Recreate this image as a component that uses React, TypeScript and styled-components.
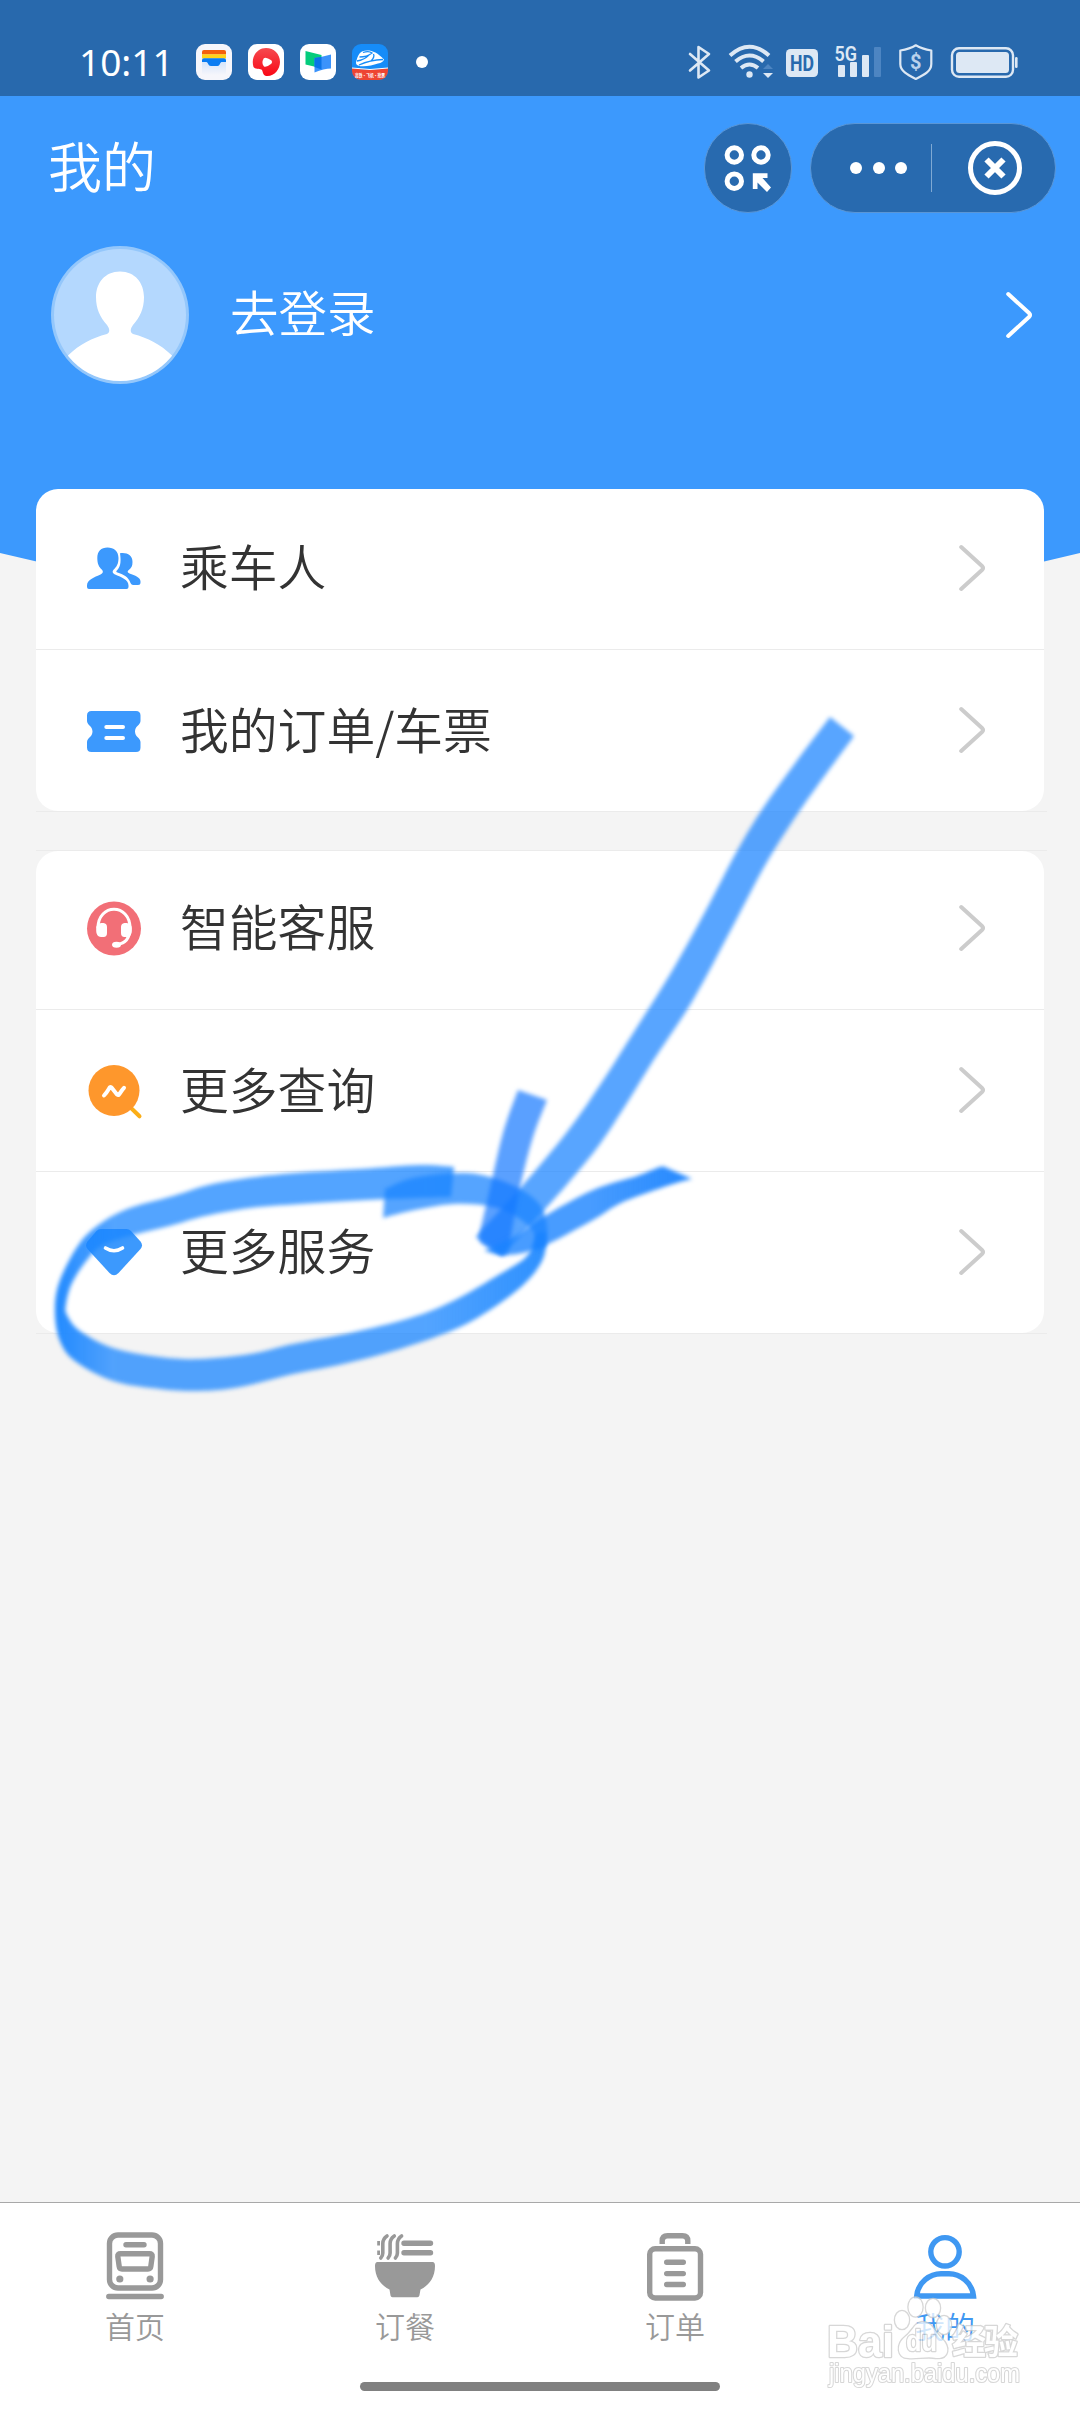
import React from 'react';
import styled, { createGlobalStyle } from 'styled-components';

const BLUE = '#3c99fd';
const DEEP = '#286aaf';
const STATUS = '#dde8f4';
const GREY = '#999999';

const GlobalStyle = createGlobalStyle`
  * { box-sizing: border-box; }
  body {
    margin: 0;
    background: #f4f4f4;
    font-family: "Noto Sans", "Noto Sans CJK SC", sans-serif;
  }
`;

const Page = styled.div`
  position: relative;
  display: flex;
  flex-direction: column;
  width: 1080px;
  height: 2412px;
  overflow: hidden;
  background: #f4f4f4;
`;

const Hero = styled.header`
  flex: none;
  height: 620px;
  background: ${BLUE};
  clip-path: circle(2275px at 540px -1657px);
`;

const StatusBar = styled.div`
  display: flex;
  justify-content: space-between;
  height: 96px;
  padding: 28px 60px 0 79px;
  background: #2869ad;
`;

const StatusLeft = styled.div`
  display: flex;
  align-items: center;
  height: 68px;
`;

const Clock = styled.span`
  width: 117px;
  padding-bottom: 1px;
  color: #fff;
  font-size: 37px;
  font-weight: 450;
  line-height: 67px;
`;

const AppIcons = styled.div`
  display: flex;
  gap: 16px;
`;

const Dot = styled.i<{ $size: number }>`
  width: ${(p) => p.$size}px;
  height: ${(p) => p.$size}px;
  border-radius: 50%;
  background: #fff;
`;

const MoreDot = styled(Dot)`
  margin-left: 28px;
`;

const StatusIcons = styled.svg`
  flex: none;
  width: 336px;
  height: 68px;
`;

const NavBar = styled.div`
  display: flex;
  align-items: center;
  height: 144px;
  padding: 0 24px 0 48px;
`;

const Title = styled.h1`
  flex: 1;
  margin: 0;
  padding-bottom: 6px;
  color: #fff;
  font-family: "Noto Sans CJK SC", sans-serif;
  font-size: 54px;
  font-weight: 350;
  line-height: 80px;
`;

const RoundButton = styled.button`
  display: flex;
  align-items: center;
  justify-content: center;
  width: 88px;
  height: 90px;
  margin-right: 18px;
  padding: 0;
  border: 1px solid #5a96d6;
  border-radius: 45px;
  background: ${DEEP};
`;

const Capsule = styled.div`
  display: flex;
  align-items: center;
  width: 246px;
  height: 90px;
  border: 1px solid #5a96d6;
  border-radius: 45px;
  background: ${DEEP};
`;

const Dots = styled.div`
  display: flex;
  justify-content: space-between;
  width: 57px;
  margin-left: 39px;
`;

const Divider = styled.i`
  width: 1px;
  height: 48px;
  margin: 0 35px 0 24px;
  background: #7fa9d3;
`;

const Profile = styled.div`
  display: flex;
  align-items: center;
  height: 138px;
  margin-top: 6px;
  padding: 0 47px 0 51px;
`;

const LoginText = styled.span`
  flex: 1;
  margin-left: 41px;
  padding-bottom: 9px;
  color: #fff;
  font-family: "Noto Sans CJK SC", sans-serif;
  font-size: 48.5px;
  font-weight: 350;
  line-height: 70px;
`;

const Content = styled.main`
  flex: 1;
  display: flex;
  flex-direction: column;
  gap: 38px;
  margin-top: -131px;
  padding: 0 33px 0 36px;
  z-index: 1;
`;

const Group = styled.section<{ $lineTop?: boolean }>`
  border-top: ${(p) => (p.$lineTop ? '1px solid #ebebeb' : '0')};
  border-bottom: 1px solid #ebebeb;
`;

const Card = styled.div`
  width: 1008px;
  overflow: hidden;
  border-radius: 22px;
  background: #fff;
`;

const Row = styled.div<{ $height: number; $lift: number }>`
  display: flex;
  align-items: center;
  box-sizing: content-box;
  height: ${(p) => p.$height - p.$lift}px;
  padding: 0 58px ${(p) => p.$lift}px 48px;
  & + & {
    border-top: 1px solid #ebebeb;
  }
`;

const RowLabel = styled.span`
  flex: 1;
  margin-left: 36px;
  padding-bottom: 5px;
  color: #333;
  font-family: "Noto Sans CJK SC", sans-serif;
  font-size: 48.8px;
  font-weight: 350;
  line-height: 70px;
`;

const TabBar = styled.nav`
  position: relative;
  flex: none;
  display: flex;
  height: 210px;
  border-top: 1px solid #a8a8a8;
  background: #fff;
`;

const Tab = styled.div<{ $active?: boolean }>`
  flex: 1;
  display: flex;
  flex-direction: column;
  align-items: center;
  padding-top: 27px;
  color: ${(p) => (p.$active ? '#3f98f2' : GREY)};
`;

const TabLabel = styled.span`
  margin-top: 3px;
  font-family: "Noto Sans CJK SC", sans-serif;
  font-size: 30px;
  font-weight: 350;
  line-height: 40px;
`;

const HomeIndicator = styled.i`
  position: absolute;
  left: 360px;
  bottom: 21px;
  width: 360px;
  height: 9px;
  border-radius: 5px;
  background: #808080;
`;

const Watermark = styled.svg`
  position: absolute;
  right: 50px;
  bottom: 10px;
  width: 210px;
  height: 110px;
  opacity: 0.76;
  paint-order: stroke;
`;

const Ink = styled.svg`
  position: absolute;
  left: 0;
  top: 680px;
  z-index: 2;
  pointer-events: none;
`;

/* ---------- status bar ---------- */

const WalletIcon = () => (
  <svg width="36" height="36" viewBox="0 0 36 36">
    <defs>
      <linearGradient id="wl" x1="0" y1="0" x2="0" y2="1">
        <stop offset="0" stopColor="#cfe2fb" />
        <stop offset="1" stopColor="#f6f6fb" />
      </linearGradient>
    </defs>
    <rect width="36" height="36" rx="9" fill="#f6f6fb" />
    <rect x="6" y="16" width="24" height="15" rx="2" fill="url(#wl)" />
    <path d="M6 10.500V8q0-2 2-2H28q2 0 2 2V10.500Z" fill="#f4600c" />
    <path d="M6 14.500V10.300H30V14.500Z" fill="#ffd21a" />
    <path d="M6 18V16q0-1.800 2-1.800H28q2 0 2 1.800V18H25.500C24 18 24 22 21.500 22H15C12 22 12 18 10.500 18Z" fill="#0a7cf2" />
  </svg>
);

const VideoIcon = () => (
  <svg width="36" height="36" viewBox="0 0 36 36">
    <defs>
      <linearGradient id="vd" x1="0" y1="0" x2="0" y2="1">
        <stop offset="0" stopColor="#f54a4f" />
        <stop offset="1" stopColor="#f90816" />
      </linearGradient>
    </defs>
    <rect width="36" height="36" rx="9" fill="#fff" />
    <path d="M18 4C26 4 32 10 32 18C32 25 26.500 32 19.500 32C15 32 15.500 29.500 14 26C12.500 24.500 7.500 26 5.500 23C2.500 13 9 4 18 4Z" fill="url(#vd)" />
    <path d="M15.800 14.200Q18 12.500 23.300 16.300Q25 18 23.300 19.700Q18.500 23.500 16 22.500Q13 19 15.800 14.200Z" fill="#fff" />
  </svg>
);

const MeetIcon = () => (
  <svg width="36" height="36" viewBox="0 0 36 36">
    <rect width="36" height="36" rx="9" fill="#fff" />
    <path d="M5.500 7L21.500 11V23L14 22.500L5.500 20.500Z" fill="#04cc7c" />
    <path d="M14.500 14Q22 13 31 10.500V24.500Q24 24.500 14.500 28.500Z" fill="#3b93fb" />
    <path d="M14.500 14L21.500 12.800V25.400L14.500 23Z" fill="#0a74e8" />
  </svg>
);

const RailIcon = () => (
  <svg width="36" height="36" viewBox="0 0 36 36">
    <defs>
      <clipPath id="rl">
        <rect width="36" height="36" rx="9" />
      </clipPath>
    </defs>
    <g clipPath="url(#rl)">
      <rect width="36" height="36" fill="#168cf8" />
      <path d="M0 24Q18 27 36 24V36H0Z" fill="#ee4532" />
      <path d="M0 24Q18 27 36 24" fill="none" stroke="#fff" strokeWidth="1" />
    </g>
    <path d="M10 7.500C16 5 24 6.500 32 15.500Q31 18.500 26 19.500C20 21.500 11 23.500 6 21.500Q3 20.500 4.500 16.500C5.500 13 7 9 10 7.500Z" fill="#fff" />
    <path d="M11 8.500Q17 6.500 20 9Q15 13 7.500 13M5 17Q12 16 17 11M7 21Q18 16 31 15.500M19 17Q23 13 21.500 10" fill="none" stroke="#168cf8" strokeWidth="1.300" />
    <text x="18" y="32.800" textAnchor="middle" textLength="30" lengthAdjust="spacingAndGlyphs" fontSize="4.600" fontWeight="700" fill="#fff" fontFamily="Noto Sans CJK SC, sans-serif">高铁·飞机·抢票</text>
  </svg>
);

/* origin of this drawing is (684, 28) on the page */
const SystemIcons = () => (
  <StatusIcons viewBox="684 28 336 68" fill="none" stroke={STATUS}>
    <path d="M690 54L709 70.500L698.500 77.500V47L709 54L690 70.500" strokeWidth="2.600" strokeLinejoin="round" strokeLinecap="round" />
    <g strokeWidth="4">
      <path d="M730 55.500Q749.500 38 769 55.500" />
      <path d="M735.500 61.500Q749.500 49.500 763.500 61.500" />
      <path d="M741 68Q749.500 61 758 68" />
    </g>
    <circle cx="749.500" cy="74.500" r="3.200" fill={STATUS} stroke="none" />
    <path d="M763 69L768 64L773 69Z" fill="#4d85c2" stroke="none" />
    <path d="M763 73H773L768 78Z" fill={STATUS} stroke="none" />
    <rect x="786" y="49" width="32" height="28" rx="4.500" fill={STATUS} stroke="none" />
    <text x="802" y="71" textAnchor="middle" textLength="24" lengthAdjust="spacingAndGlyphs" fontFamily="Roboto, sans-serif" fontSize="22.500" fontWeight="700" fill="#2869ad" stroke="none">HD</text>
    <text x="834.500" y="60.500" textLength="22.500" lengthAdjust="spacingAndGlyphs" fontFamily="Roboto, sans-serif" fontSize="21" fontWeight="600" fill={STATUS} stroke="none">5G</text>
    <g fill={STATUS} stroke="none">
      <rect x="838" y="65" width="7" height="12" rx="1" />
      <rect x="850" y="62" width="7" height="15" rx="1" />
      <rect x="862" y="55" width="7" height="22" rx="1" />
      <rect x="874" y="47" width="7" height="30" rx="1" fill="#4d85c2" />
    </g>
    <path d="M915.800 45.300Q922 49 931.300 50.500V64C931.300 71 925 74.500 915.800 79C907 74.500 900.300 71 900.300 64V50.500Q910 49 915.800 45.300Z" strokeWidth="2.200" strokeLinejoin="round" />
    <text x="915.800" y="69" textAnchor="middle" fontFamily="Roboto, sans-serif" fontSize="20" fontWeight="700" fill="#b9d2ec" stroke="none">$</text>
    <rect x="952" y="48.300" width="61" height="28.500" rx="7" strokeWidth="2.400" />
    <rect x="956" y="52" width="53" height="21" rx="3.500" fill={STATUS} stroke="none" />
    <rect x="1015" y="57" width="2.600" height="11" rx="1.200" fill={STATUS} stroke="none" />
  </StatusIcons>
);

/* ---------- header ---------- */

const GridIcon = () => (
  <svg width="50" height="50" viewBox="723 143 50 50" fill="none" stroke="#fff" strokeWidth="5">
    <circle cx="734.300" cy="155" r="7.200" />
    <circle cx="761" cy="155" r="7.200" />
    <circle cx="734.300" cy="181.200" r="7.200" />
    <path d="M752.800 173.300H767.500V178H762.500L771 187.500L767 192L757.500 182.500V189H752.800Z" fill="#fff" stroke="none" />
  </svg>
);

const CloseIcon = () => (
  <svg width="56" height="56" viewBox="0 0 56 56" fill="none" stroke="#fff">
    <circle cx="28" cy="28" r="24.500" strokeWidth="5" />
    <path d="M19.500 19.500L36.500 36.500M36.500 19.500L19.500 36.500" strokeWidth="6" />
  </svg>
);

const Avatar = () => (
  <svg width="138" height="138" viewBox="0 0 138 138">
    <defs>
      <clipPath id="av">
        <circle cx="69" cy="69" r="66" />
      </clipPath>
    </defs>
    <circle cx="69" cy="69" r="69" fill="#94c7fb" />
    <circle cx="69" cy="69" r="66" fill="#b4d8fe" />
    <path clipPath="url(#av)" d="M69 25.500C84 25.500 93 37 93 51C93 63 89 71 82 79C79.500 82.500 78.500 86 82 88C97 92 109 98 121 109.500V138H17V109.500C29 98 41 92 56 88C59.500 86 58.500 82.500 56 79C49 71 45 63 45 51C45 37 54 25.500 69 25.500Z" fill="#fff" />
  </svg>
);

const Chevron = ({ color }: { color: string }) => (
  <svg width="28" height="48" viewBox="0 0 28 48" fill="none" stroke={color} strokeWidth="4" strokeLinecap="round" strokeLinejoin="round">
    <path d="M3.200 3L24 22Q26 24 24 26L3.200 45" />
  </svg>
);

/* ---------- list icons, all in a 60px box ---------- */

const PeopleIcon = () => (
  <svg width="60" height="60" viewBox="0 0 60 60" fill={BLUE}>
    <path d="M23.500 9.500C30 9.500 34.500 13.500 34.500 20C34.500 26 32.500 29 29.500 31.800C28 33.500 28.500 35.300 30.500 36.200C38 39.500 44.500 41.500 44.500 47.500V49Q44.500 51 42.500 51H5Q3 51 3 49V47.500C3 41.500 10 39.500 17 36.200C19 35.300 19.500 33.500 18 31.800C15 29 13.300 26 13.300 20C13.300 13.500 17 9.500 23.500 9.500Z" />
    <path d="M36 15.200C43 14.200 48.500 17 48.500 24C48.500 28 47.500 30 44.500 32.200C43 33.500 43.500 34.500 45.500 35.500C51 37.500 56.500 39.500 56.500 43.500V44.500Q56.500 47 54 47H49Q47.500 47 46.500 45C44.500 38.500 39 36.500 33.500 34.500C31.500 33.800 32.500 33 33.500 31.800C37 28 37 22 36 15.200Z" />
  </svg>
);

const TicketIcon = () => (
  <svg width="60" height="60" viewBox="0 0 60 60">
    <path d="M7.500 11H52Q56.500 11 56.500 15.500V21C56.500 25 51 26 51 31.500C51 37 56.500 38 56.500 42V47.500Q56.500 52 52 52H7.500Q3 52 3 47.500V42C3 38 8.500 37 8.500 31.500C8.500 26 3 25 3 21V15.500Q3 11 7.500 11Z" fill={BLUE} />
    <path d="M22.300 27H39M22.300 38H39" stroke="#fff" strokeWidth="4" strokeLinecap="round" />
  </svg>
);

const HeadsetIcon = () => (
  <svg width="60" height="60" viewBox="0 0 60 60">
    <circle cx="30" cy="30.500" r="27" fill="#f26f77" />
    <path d="M14 30C14 5 46 5 46 30C46 40 41 45.500 33 46.500" fill="none" stroke="#fff" strokeWidth="3" />
    <path d="M17.500 25H19.500Q23 25.500 23 29V35Q23 39 19.500 39H17Q12.200 38.500 12.200 33V30Q12.200 25.500 17.500 25ZM42.500 25H40.500Q37 25.500 37 29V35Q37 39 40.500 39H43Q47.800 38.500 47.800 33V30Q47.800 25.500 42.500 25Z" fill="#fff" />
    <ellipse cx="32.500" cy="46.800" rx="4.500" ry="3" fill="#fff" />
  </svg>
);

const SearchIcon = () => (
  <svg width="60" height="60" viewBox="0 0 60 60" fill="none" strokeLinecap="round" strokeLinejoin="round">
    <path d="M46 47L55.500 56.300" stroke="#fbae17" strokeWidth="4" />
    <circle cx="30" cy="30.500" r="25.500" fill="#fe972c" />
    <path d="M20 35.500C26 29 25 26 27.500 27.500L33 34.500C35.500 36.500 35 33 40 27.800" stroke="#fff" strokeWidth="4" />
  </svg>
);

const GemIcon = () => (
  <svg width="60" height="60" viewBox="0 0 60 60">
    <path d="M17 7H42.500Q45 7 47 9L56.500 19.500Q59.500 23.500 56.500 27L34.500 51Q30 55.500 25.500 51L3.500 27Q.5 23.500 3.500 19.500L12.500 9Q14.500 7 17 7Z" fill={BLUE} />
    <path d="M21.500 26Q30 31.500 38.500 26" fill="none" stroke="#fff" strokeWidth="3.600" strokeLinecap="round" />
  </svg>
);

/* ---------- tab icons, 64x72 ---------- */

const TabSvg = styled.svg`
  width: 64px;
  height: 72px;
  fill: none;
  stroke: currentColor;
  stroke-width: 5.4px;
`;

const TrainIcon = () => (
  <TabSvg viewBox="0 0 64 72">
    <rect x="6.500" y="5" width="51" height="53" rx="8.500" />
    <path d="M23 14.700H41M5.800 66.500H58.200" strokeLinecap="round" />
    <path d="M17.500 23.800H46.500Q49.500 23.800 49.200 26.500L47.800 36.500Q47.500 39 45 39H19Q16.500 39 16.200 36.500L14.800 26.500Q14.500 23.800 17.500 23.800Z" />
    <g fill="currentColor" stroke="none">
      <circle cx="16.800" cy="49" r="3.600" />
      <circle cx="47.100" cy="49" r="3.600" />
    </g>
  </TabSvg>
);

const BowlIcon = () => (
  <TabSvg viewBox="0 0 64 72">
    <path d="M4.500 32H59.500Q62 32 62 36C62 48 55.500 55.500 47.500 59.500L46.400 65.500Q46 67.300 44.400 67.300H19.500Q17.800 67.300 17.500 65.500L16.500 59.500C8.500 55.500 2 48 2 36Q2 32 4.500 32Z" fill="currentColor" stroke="none" />
    <path d="M31 13.300H57.500M31 22.700H57.500" strokeLinecap="round" />
    <path d="M4.200 13.300H7M4.200 22.700H7" strokeWidth="4.500" />
    <g strokeWidth="3.600" strokeLinecap="round">
      <path d="M14 6C11 8 9.800 9.500 9.800 13.500V23C9.800 26 9.300 26.500 7.800 28" />
      <path d="M21.300 6C18.300 8 17.100 9.500 17.100 13.500V23C17.100 26 16.600 26.500 15.100 28" />
      <path d="M28.600 6C25.600 8 24.400 9.500 24.400 13.500V23C24.400 26 23.900 26.500 22.400 28" />
    </g>
  </TabSvg>
);

const OrdersIcon = () => (
  <TabSvg viewBox="0 0 64 72">
    <rect x="6.700" y="18.700" width="50.800" height="49.300" rx="5.500" />
    <path d="M19.200 14V11Q19.200 5.700 24.500 5.700H39.500Q44.800 5.700 44.800 11V14" />
    <path d="M23.700 32.300H40.300M23.700 43.600H40.300M23.700 54.500H40.300" strokeLinecap="round" />
  </TabSvg>
);

const MineIcon = () => (
  <TabSvg viewBox="0 0 64 72">
    <circle cx="32" cy="21.800" r="14.200" />
    <path d="M3.700 66C5 52 17 43.700 28 43.700H36C47 43.700 59 52 60.500 66Z" />
  </TabSvg>
);

/* ---------- pen strokes ---------- */

type Pt = [number, number];

/** Catmull-Rom spline through the points, written as cubic segments. */
const spline = (pts: Pt[]) =>
  pts
    .slice(0, -1)
    .map((p1, i) => {
      const p0 = pts[i - 1] ?? p1;
      const p2 = pts[i + 1];
      const p3 = pts[i + 2] ?? p2;
      const c = [
        p1[0] + (p2[0] - p0[0]) / 6, p1[1] + (p2[1] - p0[1]) / 6,
        p2[0] - (p3[0] - p1[0]) / 6, p2[1] - (p3[1] - p1[1]) / 6,
        p2[0], p2[1],
      ];
      return 'C' + c.map((n) => n.toFixed(1)).join(' ');
    })
    .join('');

const ribbon = (a: Pt[], b: Pt[]) => `M${a[0].join(' ')}${spline(a)}L${b[0].join(' ')}${spline(b)}Z`;

const shaft = ribbon(
  [[830, 717], [796, 762], [763, 808], [737, 851], [706, 910], [672, 971], [637, 1027], [600, 1085], [567, 1132], [522, 1186], [480, 1232], [477, 1238]],
  [[502, 1256], [547, 1207], [575, 1175], [600, 1144], [627, 1103], [653, 1061], [693, 1000], [733, 926], [767, 862], [803, 806], [854, 736]],
);
const leftBarb = ribbon(
  [[518, 1090], [503, 1133], [489, 1193], [480, 1233], [481, 1243]],
  [[503, 1256], [509, 1248], [512, 1230], [521, 1183], [533, 1137], [547, 1100]],
);
const rightBarb = ribbon(
  [[485, 1250], [515, 1236], [543, 1217], [593, 1190], [637, 1176], [660, 1167], [667, 1168]],
  [[692, 1179], [673, 1184], [623, 1202], [593, 1220], [550, 1243], [527, 1252], [503, 1255], [485, 1251]],
);
const loop = ribbon(
  [[454, 1167], [420, 1165], [360, 1169], [283, 1174], [217, 1183], [173, 1196], [127, 1209], [97, 1226], [77, 1247], [59, 1283], [55, 1313], [60, 1341], [75, 1361], [113, 1381], [160, 1389], [200, 1391], [240, 1387], [293, 1374], [343, 1364], [400, 1349], [460, 1327], [503, 1301], [530, 1278], [544, 1256], [546, 1232]],
  [[536, 1233], [527, 1256], [500, 1274], [453, 1301], [410, 1318], [350, 1333], [293, 1344], [250, 1354], [200, 1359], [160, 1357], [113, 1348], [80, 1331], [67, 1315], [66, 1304], [72, 1283], [87, 1260], [103, 1245], [133, 1235], [173, 1225], [205, 1216], [250, 1208], [300, 1204], [367, 1200], [451, 1197]],
);
const loopEnd = ribbon(
  [[385, 1189], [413, 1178], [460, 1173], [490, 1177], [520, 1189], [540, 1205], [547, 1227], [545, 1247]],
  [[534, 1250], [536, 1236], [520, 1219], [493, 1207], [453, 1204], [410, 1211], [383, 1218]],
);

const PenStrokes = () => (
  <Ink width="1080" height="740" viewBox="0 680 1080 740">
    <defs>
      <filter id="soft" filterUnits="userSpaceOnUse" x="0" y="680" width="1080" height="740" colorInterpolationFilters="sRGB">
        <feGaussianBlur stdDeviation="2" />
      </filter>
      <linearGradient id="ink" gradientUnits="userSpaceOnUse" x1="54" y1="0" x2="550" y2="0">
        <stop offset="0" stopColor="#1a86ff" stopOpacity=".97" />
        <stop offset=".12" stopColor="#1a86ff" stopOpacity=".75" />
        <stop offset=".75" stopColor="#1a86ff" stopOpacity=".75" />
        <stop offset="1" stopColor="#1a86ff" stopOpacity=".92" />
      </linearGradient>
      <linearGradient id="barb" gradientUnits="userSpaceOnUse" x1="590" y1="0" x2="690" y2="0">
        <stop offset="0" stopColor="#1a83ff" stopOpacity=".8" />
        <stop offset="1" stopColor="#1a83ff" stopOpacity=".95" />
      </linearGradient>
    </defs>
    <path d={loop} fill="url(#ink)" filter="url(#soft)" />
    <path d={loopEnd} fill="#1a84ff" fillOpacity=".74" filter="url(#soft)" />
    <path d={shaft} fill="#1a84ff" fillOpacity=".73" filter="url(#soft)" />
    <path d={leftBarb} fill="#1478ff" fillOpacity=".7" filter="url(#soft)" />
    <path d={rightBarb} fill="url(#barb)" filter="url(#soft)" />
  </Ink>
);

const BaiduMark = () => (
  <Watermark viewBox="820 2292 210 110" fill="#ffffff" stroke="#cbcbcb" strokeWidth="2.600" strokeLinejoin="round">
    <ellipse cx="902" cy="2320" rx="7" ry="9" />
    <ellipse cx="915.500" cy="2307" rx="7" ry="9.500" />
    <ellipse cx="933" cy="2308" rx="7" ry="9" />
    <ellipse cx="944" cy="2325" rx="7" ry="9" />
    <path d="M922 2322C914 2323 913 2331 905 2337C896 2344 897 2358 908 2358C916 2359 928 2356 936 2358C949 2359 951 2347 941 2338C934 2331 932 2322 922 2322Z" />
    <g fontFamily="Liberation Sans, sans-serif" fontWeight="700">
      <text x="827" y="2356.500" fontSize="44" textLength="67" lengthAdjust="spacingAndGlyphs">Bai</text>
      <text x="906" y="2351" fontSize="29" textLength="31" lengthAdjust="spacingAndGlyphs">du</text>
    </g>
    <text x="952" y="2353.500" fontSize="34" fontWeight="700" textLength="66" fontFamily="Noto Sans CJK SC, sans-serif">经验</text>
    <text x="829" y="2382" fontSize="25" textLength="191" lengthAdjust="spacingAndGlyphs" fontFamily="Liberation Sans, sans-serif" strokeWidth="2.200">jingyan.baidu.com</text>
  </Watermark>
);

interface RowData {
  label: string;
  icon: React.ReactNode;
  height: number;
  lift: number;
}

const account: RowData[] = [
  { label: '乘车人', icon: <PeopleIcon />, height: 160, lift: 3 },
  { label: '我的订单/车票', icon: <TicketIcon />, height: 161, lift: 1 },
];

const service: RowData[] = [
  { label: '智能客服', icon: <HeadsetIcon />, height: 158, lift: 5 },
  { label: '更多查询', icon: <SearchIcon />, height: 161, lift: 1 },
  { label: '更多服务', icon: <GemIcon />, height: 161, lift: 2 },
];

const Rows = ({ items }: { items: RowData[] }) => (
  <Card>
    {items.map((r) => (
      <Row key={r.label} $height={r.height} $lift={r.lift}>
        {r.icon}
        <RowLabel>{r.label}</RowLabel>
        <Chevron color="#cccccc" />
      </Row>
    ))}
  </Card>
);

export default function App() {
  return (
    <>
      <GlobalStyle />
      <Page>
        <Hero>
          <StatusBar>
            <StatusLeft>
              <Clock>10:11</Clock>
              <AppIcons>
                <WalletIcon />
                <VideoIcon />
                <MeetIcon />
                <RailIcon />
              </AppIcons>
              <MoreDot $size={12} />
            </StatusLeft>
            <SystemIcons />
          </StatusBar>
          <NavBar>
            <Title>我的</Title>
            <RoundButton aria-label="小程序">
              <GridIcon />
            </RoundButton>
            <Capsule>
              <Dots>
                <Dot $size={12} />
                <Dot $size={12} />
                <Dot $size={12} />
              </Dots>
              <Divider />
              <CloseIcon />
            </Capsule>
          </NavBar>
          <Profile>
            <Avatar />
            <LoginText>去登录</LoginText>
            <Chevron color="#ffffff" />
          </Profile>
        </Hero>
        <Content>
          <Group>
            <Rows items={account} />
          </Group>
          <Group $lineTop>
            <Rows items={service} />
          </Group>
        </Content>
        <TabBar>
          <Tab>
            <TrainIcon />
            <TabLabel>首页</TabLabel>
          </Tab>
          <Tab>
            <BowlIcon />
            <TabLabel>订餐</TabLabel>
          </Tab>
          <Tab>
            <OrdersIcon />
            <TabLabel>订单</TabLabel>
          </Tab>
          <Tab $active>
            <MineIcon />
            <TabLabel>我的</TabLabel>
          </Tab>
          <HomeIndicator />
          <BaiduMark />
        </TabBar>
        <PenStrokes />
      </Page>
    </>
  );
}
